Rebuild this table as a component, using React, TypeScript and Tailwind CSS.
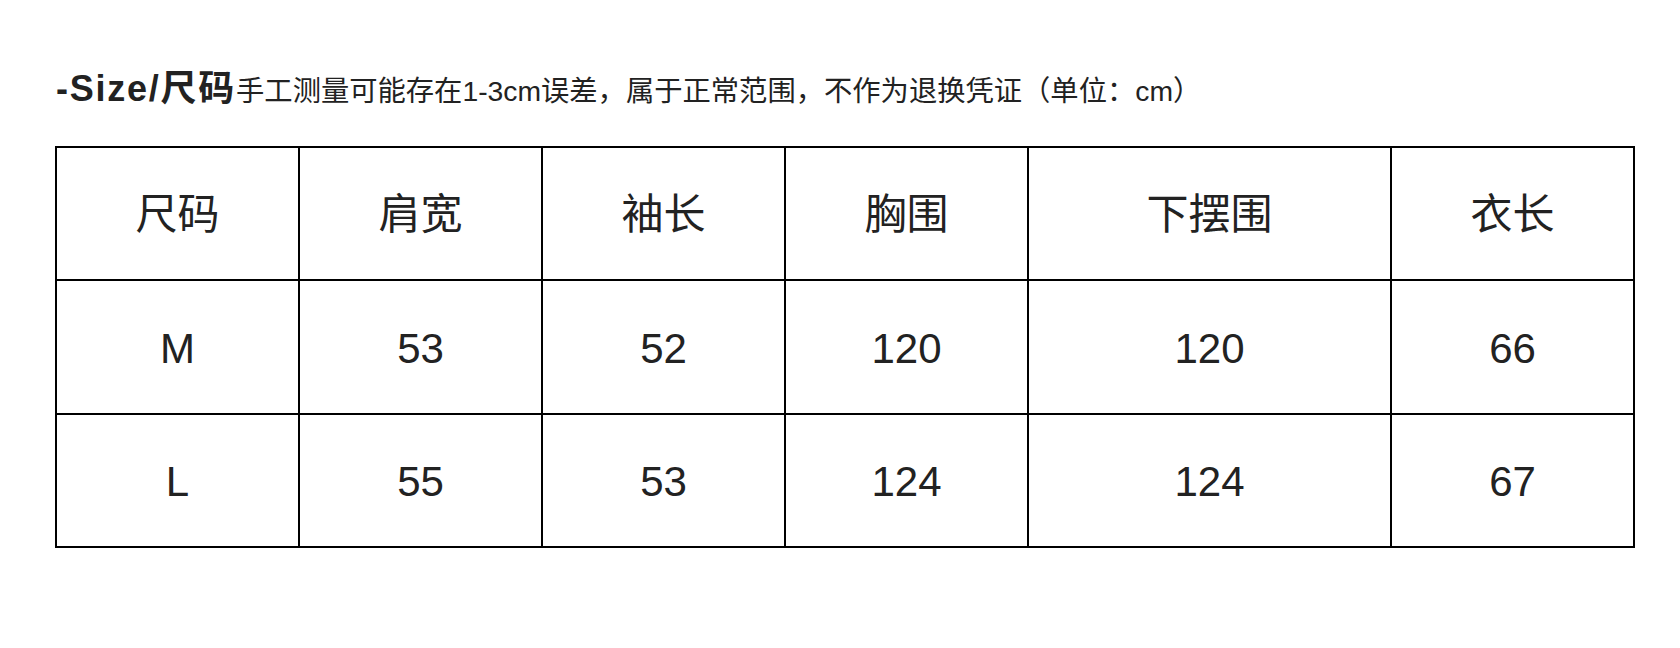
const head = ["尺码", "肩宽", "袖长", "胸围", "下摆围", "衣长"];
const rows = [
  ["M", "53", "52", "120", "120", "66"],
  ["L", "55", "53", "124", "124", "67"],
];
const widths = ["w-[243px]", "w-[243px]", "w-[243px]", "w-[243px]", "w-[363px]", "w-[243px]"];

function Row({ cells, h }: { cells: string[]; h: string }) {
  return (
    <div className="flex">
      {cells.map((c, i) => (
        <div
          key={i}
          className={`${widths[i]} ${h} flex items-center justify-center pt-[2px] border-r-2 border-b-2 border-black`}
        >
          {c}
        </div>
      ))}
    </div>
  );
}

export default function App() {
  return (
    <div
      className="w-[1680px] h-[648px] bg-white text-[#222] pt-[69px] pl-[56px]"
      style={{ fontFamily: '"Liberation Sans", "Noto Sans CJK SC", sans-serif' }}
    >
      <h2 className="text-[36px] leading-[40px] font-bold tracking-[1.75px] whitespace-nowrap">
        -Size/尺码
        <span className="text-[28.3px] font-normal tracking-normal">
          手工测量可能存在1-3cm误差，属于正常范围，不作为退换凭证（单位：cm）
        </span>
      </h2>

      <div className="mt-[35px] ml-[-1px] w-fit border-l-2 border-t-2 border-black text-[42px]">
        <Row cells={head} h="h-[133px]" />
        <Row cells={rows[0]} h="h-[134px]" />
        <Row cells={rows[1]} h="h-[133px]" />
      </div>
    </div>
  );
}
